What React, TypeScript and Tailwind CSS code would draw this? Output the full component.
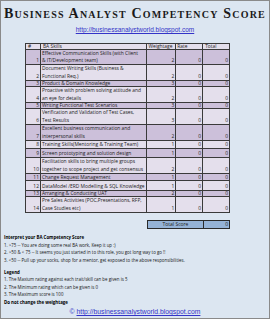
import React from 'react';

type Row = { n: number; lines: string[]; w: number; h: number; dark: boolean };

const rows: Row[] = [
  { n: 1, lines: ['Effective Communication Skills (with Client', '& IT/Development team)'], w: 2, h: 15, dark: true },
  { n: 2, lines: ['Document Writing Skills (Business &', 'Functional Req.)'], w: 2, h: 16, dark: false },
  { n: 3, lines: ['Product  & Domain Knowledge'], w: 3, h: 6, dark: true },
  { n: 4, lines: ['Proactive with problem solving attitude and', 'an eye for details'], w: 2, h: 16, dark: false },
  { n: 5, lines: ['Writing Functional Test Scenarios'], w: 3, h: 6, dark: true },
  { n: 6, lines: ['Verification and Validation of Test Cases,', 'Test Results'], w: 3, h: 16, dark: false },
  { n: 7, lines: ['Excellent business communication and', 'interpersonal skills'], w: 2, h: 16, dark: true },
  { n: 8, lines: ['Training Skills(Mentoring & Training Team)'], w: 1, h: 8, dark: false },
  { n: 9, lines: ['Screen prototyping and solution design'], w: 1, h: 9, dark: true },
  { n: 10, lines: ['Facilitation skills to bring multiple groups', 'together to scope project and get consensus'], w: 2, h: 16, dark: false },
  { n: 11, lines: ['Change Request Management'], w: 1, h: 7, dark: true },
  { n: 12, lines: ['DataModel /ERD Modelling  & SQL Knowledge'], w: 1, h: 10, dark: false },
  { n: 13, lines: ['Arranging & Conducting UAT'], w: 2, h: 6, dark: true },
  { n: 14, lines: ['Pre Sales Activities (POC,Presentations, RFP,', 'Case Studies etc)'], w: 1, h: 16, dark: false },
];

const heights: Record<number, string> = {
  6: 'h-[6px] leading-[5px]',
  7: 'h-[7px] leading-[6px]',
  8: 'h-[8px] leading-[7px]',
  9: 'h-[9px] leading-[7px]',
  10: 'h-[10px] leading-[7px]',
  15: 'h-[15px] leading-[7px]',
  16: 'h-[16px] leading-[7.5px]',
};

const cell = 'border-r border-[#3a3a3a] flex flex-col justify-end overflow-hidden whitespace-nowrap';

const App: React.FC = () => {
  return (
    <div className="w-[271px] h-[320px] bg-white">
      <div className="w-[270px] h-[319px] border border-[#8a8a8a] bg-[#dce6f1] flex flex-col text-[#2a2a2a] font-['Open_Sans',sans-serif]">
        {/* heading */}
        <div className="h-[42px] flex flex-col items-center pt-[5px]">
          <div className="font-['Liberation_Serif',serif] font-bold text-[14px] leading-[16px] [font-variant:small-caps] tracking-[1.2px] text-[#1a1a1a] whitespace-nowrap">
            Business Analyst Competency Score
          </div>
          <div className="mt-[4px] text-[6.5px] leading-[8px] text-[#3434c8] underline font-['Liberation_Sans',sans-serif]">
            http://businessanalystworld.blogspot.com
          </div>
        </div>

        {/* score table */}
        <div className="ml-[24px] w-[205px] border-l border-t border-[#3a3a3a] text-[4.9px] text-[#222]">
          <div className="flex h-[6px] leading-[5px] border-b border-[#3a3a3a] bg-[#e4dfec]">
            <div className={`${cell} w-[15px] pl-[2px]`}>#</div>
            <div className={`${cell} w-[107px] pl-[2px]`}>BA Skills</div>
            <div className={`${cell} w-[29px] pl-[1px]`}>Weightage</div>
            <div className={`${cell} w-[27px] pl-[1px]`}>Rate</div>
            <div className={`${cell} w-[27px] pl-[2px]`}>Total</div>
          </div>
          {rows.map((r) => (
            <div
              key={r.n}
              className={`flex border-b border-[#3a3a3a] ${heights[r.h]} ${r.dark ? 'bg-[#ccc0da]' : 'bg-[#e4dfec]'}`}
            >
              <div className={`${cell} w-[15px] items-end pr-[1px]`}>{r.n}</div>
              <div className={`${cell} w-[107px] pl-[1px]`}>
                {r.lines.map((l, i) => (
                  <span key={i}>{l}</span>
                ))}
              </div>
              <div className={`${cell} w-[29px] items-end pr-[1px]`}>{r.w}</div>
              <div className={`${cell} w-[27px] items-end pr-[1px]`}>0</div>
              <div className={`${cell} w-[27px] items-end pr-[1px]`}>0</div>
            </div>
          ))}
        </div>

        {/* total */}
        <div className="ml-[146px] mt-[7px] w-[83px] h-[9px] flex border border-[#2a2a2a] bg-[#95b3d7] text-[5px] leading-[7px] text-[#222]">
          <div className="w-[56px] border-r border-[#2a2a2a] flex items-end justify-center">Total Score</div>
          <div className="flex-1 flex items-end justify-end pr-[1px]">0</div>
        </div>

        {/* notes */}
        <div className="mt-[5px] pl-[3px] text-[4.4px] leading-[7.5px] whitespace-nowrap text-[#151515]">
          <div className="font-bold text-black">Interpret your BA Competency Score</div>
          <div>1. &gt;75 -- You are doing some real BA work, Keep it up :)</div>
          <div>2. &gt;50 &amp; &lt; 75 -- It seems you just started in to this role, you got long way to go !!</div>
          <div>3. &lt;50 --  Pull up your socks, shop for a mentor, get exposed to the above responsibilities.</div>
          <div className="mt-[4.5px] font-bold text-black">Legend</div>
          <div>1. The Maxium rating against each trait/skill  can be given is 5</div>
          <div>2. The Minimum rating which can be given is 0</div>
          <div>3. The Maximum score  is 100</div>
          <div className="font-bold text-black">Do not change the weightage</div>
        </div>

        <div className="mt-[1px] text-center text-[6.8px] leading-[9px] text-[#3434c8] font-['Liberation_Sans',sans-serif]">
          © <span className="underline">http://businessanalystworld.blogspot.com</span>
        </div>
      </div>
    </div>
  );
};

export default App;
